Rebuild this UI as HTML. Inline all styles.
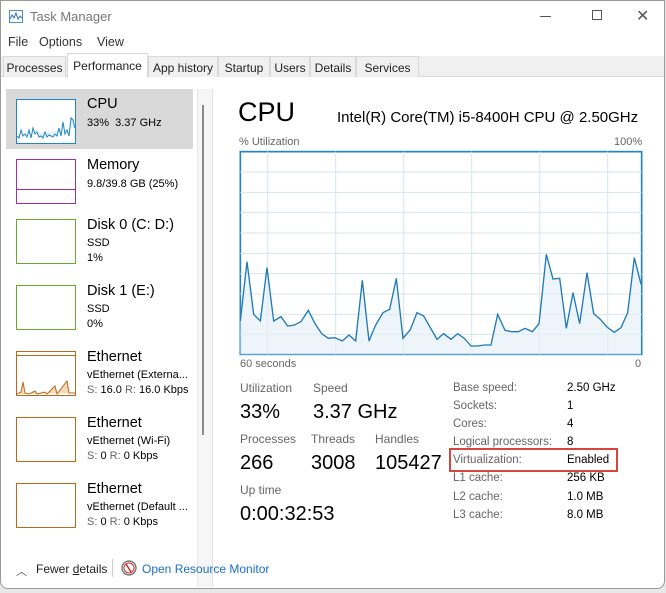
<!DOCTYPE html>
<html><head><meta charset="utf-8"><style>
*{margin:0;padding:0;box-sizing:border-box}
body{width:666px;height:593px;background:#e8e8e8;font-family:"Liberation Sans",sans-serif;position:relative;overflow:hidden;color:#000}
.win{position:absolute;left:0;top:0;width:665px;height:589px;background:#fff;border:1px solid #9a9a9a;border-radius:0 0 8px 8px;overflow:hidden}
.a{position:absolute;white-space:nowrap}
.g{color:#666}
.tab{position:absolute;top:55px;height:21px;font-size:12px;padding-top:4px;text-align:center;background:#f0f0f0;border:1px solid #d9d9d9;border-bottom:none;color:#222}
.side .t{font-size:14.5px}
.side .s{font-size:11px}
.box{position:absolute;left:15px;width:60px;height:45px;background:#fff}
.lbl{font-size:12px;color:#666}
.big{font-size:20px}
</style></head><body>
<div class="win">
<svg class="a" style="left:8px;top:9px" width="14" height="13"><rect x="0.5" y="0.5" width="13" height="12" fill="#fff" stroke="#4a8fd0"/><polyline points="1,9 3,5 5,8 7,3 9,9 11,6 13,8" fill="none" stroke="#2a70c0"/></svg>
<div class="a" style="left:29px;top:8px;font-size:13px;color:#777">Task Manager</div>
<div class="a" style="left:539px;top:15px;width:11px;height:1px;background:#555"></div>
<div class="a" style="left:591px;top:9px;width:10px;height:10px;border:1px solid #555"></div>
<div class="a" style="left:635px;top:5px;font-size:16px;color:#555">✕</div>
<div class="a" style="left:7px;top:34px;font-size:12.5px;color:#333">File</div>
<div class="a" style="left:38px;top:34px;font-size:12.5px;color:#333">Options</div>
<div class="a" style="left:96px;top:34px;font-size:12.5px;color:#333">View</div>
<div class="a" style="left:0;top:55px;width:666px;height:21px;background:#f0f0f0;border-bottom:1px solid #d9d9d9"></div>
<div class="tab" style="left:2px;width:63px">Processes</div>
<div class="tab" style="left:66px;top:52px;height:25px;background:#fff;width:81px;padding-top:5px">Performance</div>
<div class="tab" style="left:147px;width:70px">App history</div>
<div class="tab" style="left:217px;width:52px">Startup</div>
<div class="tab" style="left:269px;width:40px">Users</div>
<div class="tab" style="left:309px;width:46px">Details</div>
<div class="tab" style="left:355px;width:63px">Services</div>

<div class="side">
<div class="a" style="left:5px;top:88px;width:187px;height:60px;background:#d9d9d9"></div>
<div class="a" style="left:196px;top:88px;width:16px;height:498px;background:#f6f6f6;border-left:1px solid #e8e8e8;border-right:1px solid #e2e2e2"></div>
<div class="a" style="left:201px;top:104px;width:2px;height:330px;background:#8a8a8a"></div>
<div class="box" style="top:98px;border:1px solid #1e86c8"></div>
<svg class="a" style="left:16px;top:99px" width="58" height="43"><polyline points="0,36 2,38 4,30 6,36 8,34 10,37 12,30 14,38 16,28 18,34 20,32 22,37 24,36 26,38 28,32 30,37 32,35 34,36 36,37 38,34 40,36 42,28 44,36 46,22 48,34 50,30 52,36 54,18 56,20 58,28" fill="#e6f0f8" stroke="#1e86c8"/></svg>
<div class="a t" style="left:86px;top:95px">CPU</div>
<div class="a s" style="left:86px;top:116px">33%&nbsp; 3.37 GHz</div>

<div class="box" style="top:158px;border:1px solid #9b30a8"></div>
<div class="a" style="left:16px;top:188px;width:58px;height:1px;background:#9b30a8"></div>
<div class="a t" style="left:86px;top:156px">Memory</div>
<div class="a s" style="left:86px;top:177px">9.8/39.8 GB (25%)</div>

<div class="box" style="top:218px;border:1px solid #6aa82a"></div>
<div class="a t" style="left:86px;top:216px">Disk 0 (C: D:)</div>
<div class="a s" style="left:86px;top:236px">SSD</div>
<div class="a s" style="left:86px;top:251px">1%</div>

<div class="box" style="top:284px;border:1px solid #6aa82a"></div>
<div class="a t" style="left:86px;top:282px">Disk 1 (E:)</div>
<div class="a s" style="left:86px;top:302px">SSD</div>
<div class="a s" style="left:86px;top:317px">0%</div>

<div class="box" style="top:350px;border:1px solid #b86a1a"></div>
<div class="a" style="left:16px;top:354px;width:58px;height:1px;background:#b86a1a"></div>
<svg class="a" style="left:16px;top:351px" width="58" height="43"><polyline points="0,42 4,40 6,30 8,41 12,42 18,39 20,42 28,40 30,42 38,34 40,42 50,29 52,41 58,41" fill="#f2d8b8" stroke="#b86a1a"/></svg>
<div class="a t" style="left:86px;top:348px">Ethernet</div>
<div class="a s" style="left:86px;top:368px">vEthernet (Externa...</div>
<div class="a s" style="left:86px;top:383px"><span class="g">S:</span> 16.0 <span class="g">R:</span> 16.0 Kbps</div>

<div class="box" style="top:416px;border:1px solid #b86a1a"></div>
<div class="a t" style="left:86px;top:414px">Ethernet</div>
<div class="a s" style="left:86px;top:434px">vEthernet (Wi-Fi)</div>
<div class="a s" style="left:86px;top:449px"><span class="g">S:</span> 0 <span class="g">R:</span> 0 Kbps</div>

<div class="box" style="top:482px;border:1px solid #b86a1a"></div>
<div class="a t" style="left:86px;top:480px">Ethernet</div>
<div class="a s" style="left:86px;top:500px">vEthernet (Default ...</div>
<div class="a s" style="left:86px;top:515px"><span class="g">S:</span> 0 <span class="g">R:</span> 0 Kbps</div>
</div>

<div class="a" style="left:237px;top:96px;font-size:27px">CPU</div>
<div class="a" style="left:336px;top:108px;font-size:15px">Intel(R) Core(TM) i5-8400H CPU @ 2.50GHz</div>
<div class="a lbl" style="left:238px;top:135px;font-size:11px">% Utilization</div>
<div class="a lbl" style="left:613px;top:135px;font-size:11px">100%</div>
<svg class="a" style="left:230px;top:140px" width="420" height="230" viewBox="0 0 1260 690">
<rect x="28" y="32" width="1204" height="608" fill="#fff" stroke="#1e86c8" stroke-width="5"/>
<g stroke="#d6e4ef" stroke-width="3">
<line x1="28" y1="93" x2="1232" y2="93"/><line x1="28" y1="154" x2="1232" y2="154"/><line x1="28" y1="215" x2="1232" y2="215"/><line x1="28" y1="276" x2="1232" y2="276"/><line x1="28" y1="337" x2="1232" y2="337"/><line x1="28" y1="398" x2="1232" y2="398"/><line x1="28" y1="459" x2="1232" y2="459"/><line x1="28" y1="520" x2="1232" y2="520"/><line x1="28" y1="580" x2="1232" y2="580"/>
<line x1="110" y1="32" x2="110" y2="640"/><line x1="314" y1="32" x2="314" y2="640"/><line x1="518" y1="32" x2="518" y2="640"/><line x1="722" y1="32" x2="722" y2="640"/><line x1="926" y1="32" x2="926" y2="640"/><line x1="1130" y1="32" x2="1130" y2="640"/>
</g>
<polygon fill="#e6f0f8" fill-opacity="0.7" points="28,640 28,540 48,362 68,520 88,540 108,380 128,540 150,527 170,555 190,552 210,542 232,508 252,548 272,578 292,592 312,590 334,600 354,582 374,600 394,418 414,600 434,552 456,515 476,505 496,412 516,592 538,566 558,515 578,525 598,560 618,595 638,578 660,595 680,578 700,592 720,615 740,615 760,612 780,612 800,520 822,568 842,572 862,572 882,562 904,572 924,548 946,340 966,414 986,412 1006,562 1026,455 1046,548 1068,395 1088,518 1108,535 1128,558 1150,574 1170,560 1190,515 1210,350 1230,430 1230,640"/>
<polyline fill="none" stroke="#1e7ab8" stroke-width="4" points="28,540 48,362 68,520 88,540 108,380 128,540 150,527 170,555 190,552 210,542 232,508 252,548 272,578 292,592 312,590 334,600 354,582 374,600 394,418 414,600 434,552 456,515 476,505 496,412 516,592 538,566 558,515 578,525 598,560 618,595 638,578 660,595 680,578 700,592 720,615 740,615 760,612 780,612 800,520 822,568 842,572 862,572 882,562 904,572 924,548 946,340 966,414 986,412 1006,562 1026,455 1046,548 1068,395 1088,518 1108,535 1128,558 1150,574 1170,560 1190,515 1210,350 1230,430"/>
</svg>
<div class="a lbl" style="left:239px;top:357px;font-size:11px">60 seconds</div>
<div class="a lbl" style="left:634px;top:357px;font-size:11px">0</div>

<div class="a lbl" style="left:239px;top:380px">Utilization</div>
<div class="a lbl" style="left:312px;top:380px">Speed</div>
<div class="a big" style="left:239px;top:400px">33%</div>
<div class="a big" style="left:312px;top:400px">3.37 GHz</div>
<div class="a lbl" style="left:239px;top:431px">Processes</div>
<div class="a lbl" style="left:310px;top:431px">Threads</div>
<div class="a lbl" style="left:374px;top:431px">Handles</div>
<div class="a big" style="left:239px;top:451px">266</div>
<div class="a big" style="left:310px;top:451px">3008</div>
<div class="a big" style="left:374px;top:451px">105427</div>
<div class="a lbl" style="left:239px;top:482px">Up time</div>
<div class="a big" style="left:239px;top:502px">0:00:32:53</div>

<div class="a" style="left:452px;top:378px;font-size:11.5px;line-height:18.1px;color:#666">Base speed:<br>Sockets:<br>Cores:<br>Logical processors:<br>Virtualization:<br>L1 cache:<br>L2 cache:<br>L3 cache:</div>
<div class="a" style="left:566px;top:378px;font-size:11.5px;line-height:18.1px">2.50 GHz<br>1<br>4<br>8<br>Enabled<br>256 KB<br>1.0 MB<br>8.0 MB</div>
<div class="a" style="left:448px;top:447px;width:169px;height:24px;border:2px solid #d9443c"></div>

<div class="a" style="left:15px;top:562px;font-size:11px;color:#555">︿</div>
<div class="a" style="left:35px;top:561px;font-size:12px;color:#222">Fewer <u>d</u>etails</div>
<div class="a" style="left:111px;top:558px;width:1px;height:18px;background:#ccc"></div>
<svg class="a" style="left:120px;top:559px" width="16" height="16"><circle cx="8" cy="8" r="7" fill="#eee" stroke="#666" stroke-width="1.2"/><circle cx="8" cy="8" r="5" fill="#fff" stroke="#c33" stroke-width="1"/><line x1="5" y1="4" x2="10" y2="12" stroke="#c33" stroke-width="1.5"/></svg>
<div class="a" style="left:141px;top:561px;font-size:12px;color:#1a6fc4">Open Resource Monitor</div>
</div>
</body></html>
